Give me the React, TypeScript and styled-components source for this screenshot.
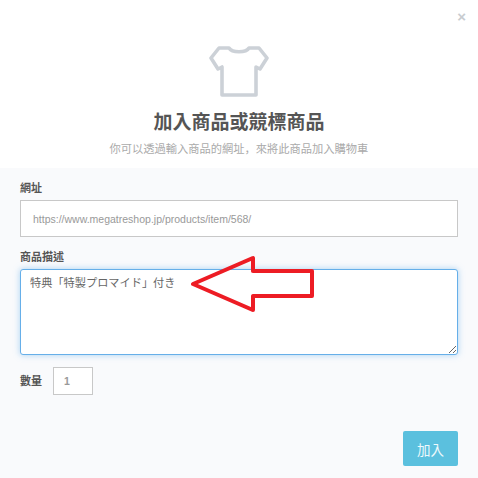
import React from 'react';
import styled, { createGlobalStyle } from 'styled-components';

const GlobalStyle = createGlobalStyle`
  html, body {
    margin: 0;
    padding: 0;
    background: #fff;
  }

  body {
    font-family: "Liberation Sans", "Noto Sans CJK TC", sans-serif;
  }
`;

const Modal = styled.div`
  position: relative;
  display: flex;
  flex-direction: column;
  width: 478px;
  height: 478px;
  overflow: hidden;
`;

const Header = styled.div`
  flex-shrink: 0;
  display: flex;
  flex-direction: column;
  align-items: center;
  height: 168px;
  padding-top: 45px;
  box-sizing: border-box;
  background: #fff;
`;

const CloseButton = styled.span`
  position: absolute;
  top: 9px;
  right: 12px;
  color: #c8ccd0;
  font-size: 15px;
  font-weight: bold;
  line-height: 16px;
`;

const Title = styled.h2`
  margin: 13px 0 0;
  color: #555;
  font-size: 19px;
  font-weight: bold;
  line-height: 26px;
`;

const Subtitle = styled.p`
  margin: 5px 0 0;
  color: #aaa;
  font-family: "Liberation Sans", "Noto Sans CJK SC", sans-serif;
  font-size: 11.25px;
  line-height: 16px;
`;

const Body = styled.form`
  flex: 1;
  display: flex;
  flex-direction: column;
  padding: 13px 20px 12px;
  background: #f9fafc;
`;

const Label = styled.label`
  display: block;
  margin-bottom: 4px;
  color: #555;
  font-size: 11px;
  font-weight: bold;
  line-height: 15px;
`;

const Field = styled.div`
  margin-bottom: 13px;
`;

const TextInput = styled.input`
  display: block;
  width: 100%;
  height: 37px;
  padding: 0 12px;
  box-sizing: border-box;
  border: 1px solid #c8c8c8;
  border-radius: 0;
  outline: none;
  background: #fff;
  color: #999;
  font-family: inherit;
  font-size: 10.5px;
`;

const Description = styled.textarea`
  display: block;
  width: 100%;
  height: 86px;
  padding: 5px 9px;
  box-sizing: border-box;
  border: 1px solid #66afe9;
  border-radius: 3px;
  outline: none;
  background: #fff;
  box-shadow: 0 0 6px rgba(102, 175, 233, 0.55);
  color: #666;
  font-family: "Liberation Sans", "Noto Sans CJK JP", sans-serif;
  font-size: 11.2px;
  line-height: 16px;
`;

const QuantityRow = styled.div`
  display: flex;
  align-items: center;
  gap: 11px;
  margin-top: -1px;
`;

const QuantityLabel = styled(Label)`
  margin: 0;
`;

const QuantityInput = styled(TextInput)`
  width: 40px;
  height: 28px;
  padding: 0 10px;
  font-weight: bold;
`;

const Footer = styled.div`
  display: flex;
  justify-content: flex-end;
  margin-top: 36px;
`;

const SubmitButton = styled.button`
  width: 55px;
  height: 35px;
  padding: 0;
  border: 0;
  border-radius: 2px;
  background: #5bc0de;
  color: #eef9fc;
  font-family: inherit;
  font-size: 13.5px;
`;

const Arrow = styled.svg`
  position: absolute;
  top: 0;
  left: 0;
  pointer-events: none;
`;

const ShirtIcon = () => (
  <svg width="60" height="52" viewBox="0 0 60 52" fill="none" stroke="#ccd1d7" strokeWidth="3.6" strokeLinejoin="round">
    <path d="M20 3 L10 3 L2 13 L9 24 L13 22 L13 50 L47 50 L47 22 L51 24 L58 13 L50 3 L40 3 C37 8 23 8 20 3 Z" />
  </svg>
);

export default function App() {
  return (
    <Modal>
      <GlobalStyle />
      <Header>
        <CloseButton>×</CloseButton>
        <ShirtIcon />
        <Title>加入商品或競標商品</Title>
        <Subtitle>你可以透過輸入商品的網址，來將此商品加入購物車</Subtitle>
      </Header>
      <Body>
        <Field>
          <Label>網址</Label>
          <TextInput readOnly value="https://www.megatreshop.jp/products/item/568/" />
        </Field>
        <Field>
          <Label>商品描述</Label>
          <Description readOnly value="特典「特製プロマイド」付き" />
        </Field>
        <QuantityRow>
          <QuantityLabel>數量</QuantityLabel>
          <QuantityInput readOnly value="1" />
        </QuantityRow>
        <Footer>
          <SubmitButton type="button">加入</SubmitButton>
        </Footer>
      </Body>
      <Arrow width="478" height="478" viewBox="0 0 478 478">
        <path
          d="M193 284 L253 258 L253 271 L312 271 L312 296 L253 296 L253 310 Z"
          fill="none"
          stroke="#ed1c24"
          strokeWidth="4"
          strokeLinejoin="round"
        />
      </Arrow>
    </Modal>
  );
}
